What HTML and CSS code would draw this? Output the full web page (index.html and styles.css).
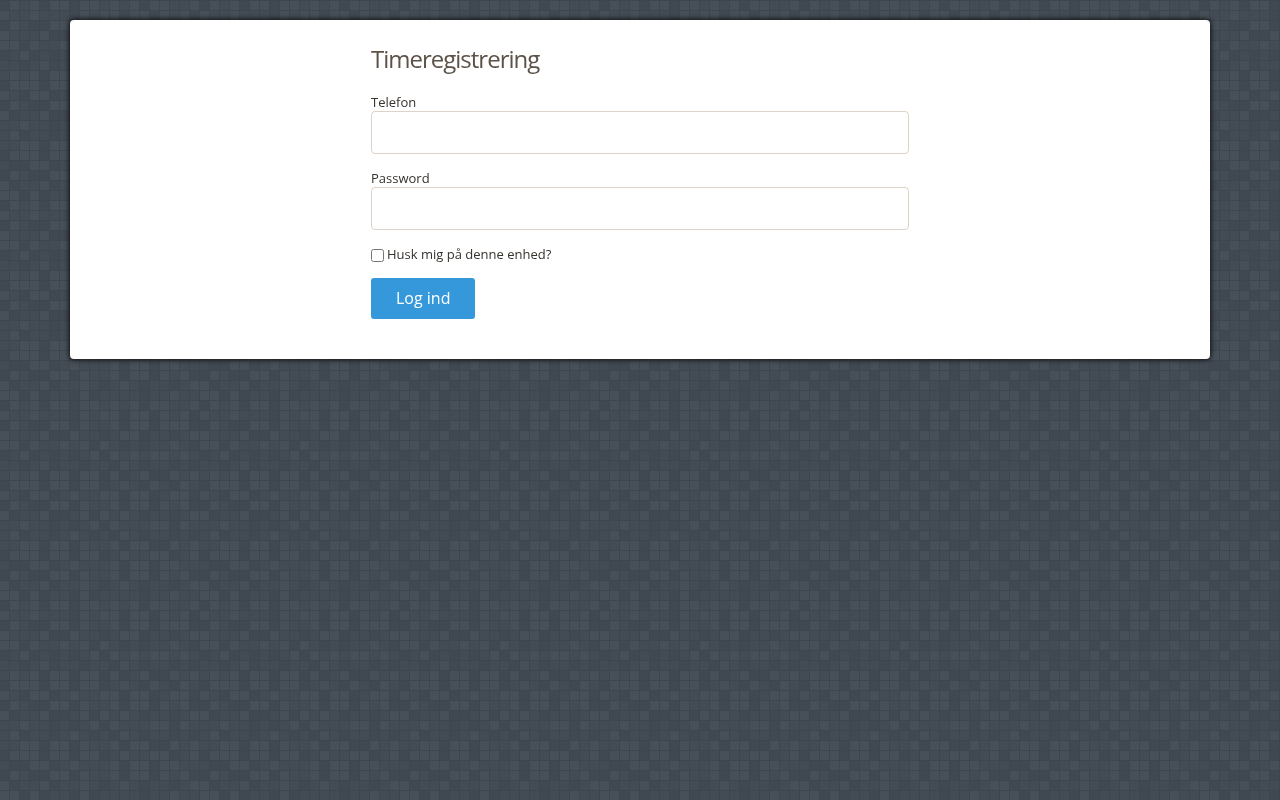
FILE: index.html
```html
<!DOCTYPE html>
<html lang="da">
<head>
<meta charset="utf-8">
<meta name="viewport" content="width=device-width, initial-scale=1">
<title>Timeregistrering</title>
<link rel="stylesheet" href="styles.css">
</head>
<body>
<svg class="backdrop" aria-hidden="true">
  <defs>
    <pattern id="tiles" width="200" height="200" patternUnits="userSpaceOnUse"></pattern>
  </defs>
  <rect width="100%" height="100%" fill="url(#tiles)"/>
</svg>
<main class="panel">
  <form class="login">
    <h1 class="title">Timeregistrering</h1>
    <div class="field">
      <label for="phone">Telefon</label>
      <input class="text-input" type="text" id="phone" name="phone">
    </div>
    <div class="field">
      <label for="password">Password</label>
      <input class="text-input" type="password" id="password" name="password">
    </div>
    <div class="remember">
      <input class="check" type="checkbox" id="remember" name="remember">
      <label for="remember">Husk mig på denne enhed?</label>
    </div>
    <button class="submit" type="submit">Log ind</button>
  </form>
</main>
<script src="script.js"></script>
</body>
</html>
```

FILE: styles.css
```css
* {
  box-sizing: border-box;
}

body {
  margin: 0;
  padding: 20px;
  background: #3d4650;
  color: #36322e;
  font-family: "Open Sans", "Noto Sans", sans-serif;
  font-size: 13px;
  line-height: 18px;
}

.backdrop {
  position: fixed;
  inset: 0;
  z-index: -1;
  width: 100%;
  height: 100%;
}

.tile-dark {
  fill: #404852;
}

.tile-mid {
  fill: #434b55;
}

.tile-light {
  fill: #475058;
}

.panel {
  max-width: 1140px;
  margin: 0 auto;
  padding: 20px 20px 40px;
  background: #fff;
  border-radius: 4px;
  box-shadow: 0 0 5px 1px #111;
}

.login {
  max-width: 538px;
  margin: 0 auto;
}

.title {
  margin: 0 0 16px;
  color: #5d5248;
  font-size: 24px;
  font-weight: 400;
  letter-spacing: -1px;
  line-height: 38px;
}

.field {
  display: flex;
  flex-direction: column;
  margin-bottom: 16px;
}

.field label {
  line-height: 17px;
}

.text-input {
  width: 100%;
  height: 43px;
  padding: 8px 12px;
  border: 1px solid #ddd3c9;
  border-radius: 4px;
  background: #fff;
  font: inherit;
}

.remember {
  display: flex;
  align-items: center;
  gap: 3px;
  margin-bottom: 16px;
  line-height: 16px;
}

.check {
  width: 13px;
  height: 13px;
  margin: 2px 0 0;
}

.submit {
  display: block;
  padding: 8px 25px 9px;
  border: 0;
  border-radius: 3px;
  background: #3498db;
  color: #fff;
  font: inherit;
  font-size: 16px;
  line-height: 24px;
  cursor: pointer;
}
```

FILE: script.js
```js
// Shade of every tile in the repeating mosaic: 0 dark, 1 mid, 2 light.
const rows = [
  "02120220221212022112",
  "21121110212202202120",
  "02100220211202202220",
  "21112002110122011012",
  "22021121202101011210",
  "01201010120212122121",
  "11012011011021011010",
  "12120220220201200212",
  "02220220220121021021",
  "21022012112202201220",
  "02100220211202202120",
  "20112001202121011012",
  "11211010120211122021",
  "12011012101021011010",
  "11220220211202200212",
  "02220220220121122012",
  "10022012111202202211",
  "02100220211202202120",
  "20112011210121011012",
  "22020110201111011211"
];
const shades = ["tile-dark", "tile-mid", "tile-light"];
const pattern = document.getElementById("tiles");

rows.forEach((row, y) => {
  [...row].forEach((shade, x) => {
    const tile = document.createElementNS("http://www.w3.org/2000/svg", "rect");
    tile.setAttribute("x", x * 10);
    tile.setAttribute("y", y * 10 + 1);
    tile.setAttribute("width", 9);
    tile.setAttribute("height", 9);
    tile.setAttribute("class", shades[shade]);
    pattern.append(tile);
  });
});
```
